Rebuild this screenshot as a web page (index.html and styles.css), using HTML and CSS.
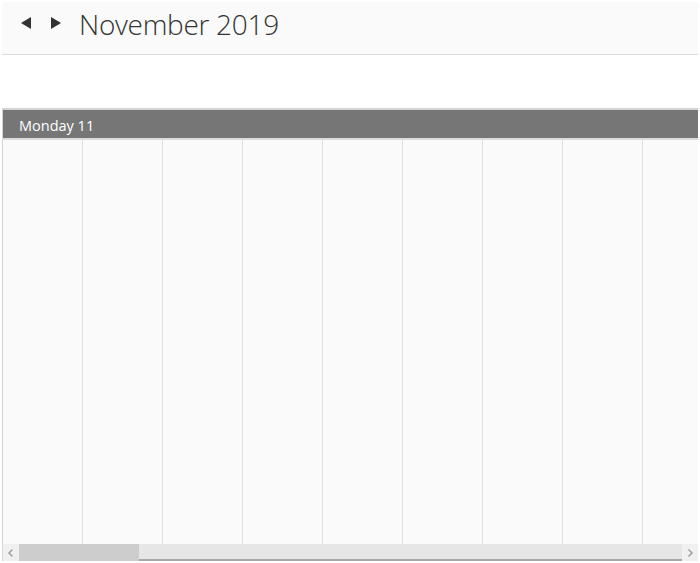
FILE: index.html
```html
<!DOCTYPE html>
<html>
<head>
<meta charset="utf-8">
<link rel="stylesheet" href="styles.css">
</head>
<body>
<div class="scheduler">
  <div class="toolbar">
    <div class="navs">
      <span class="nav prev"></span>
      <span class="nav next"></span>
    </div>
    <div class="title">November 2019</div>
  </div>
  <div class="allday"></div>
  <div class="view">
    <div class="dayhead">Monday 11</div>
    <div class="grid">
      <div class="col"></div><div class="col"></div><div class="col"></div>
      <div class="col"></div><div class="col"></div><div class="col"></div>
      <div class="col"></div><div class="col"></div><div class="col"></div>
    </div>
    <div class="hscroll">
      <div class="sbtn left"><svg width="16" height="16" viewBox="0 0 16 16"><path d="M9.5 4.5 L6 8 L9.5 11.5" fill="none" stroke="#9a9a9a" stroke-width="1.4"/></svg></div>
      <div class="track"><div class="thumb"></div></div>
      <div class="sbtn right"><svg width="16" height="16" viewBox="0 0 16 16"><path d="M6.5 4.5 L10 8 L6.5 11.5" fill="none" stroke="#9a9a9a" stroke-width="1.4"/></svg></div>
    </div>
  </div>
</div>
</body>
</html>
```

FILE: styles.css
```css
html, body {
  margin: 0;
  padding: 0;
  background: #ffffff;
}
body {
  padding: 2px 2px 0 2px;
  font-family: "Open Sans", "Liberation Sans", sans-serif;
}
.scheduler {
  width: 696px;
}
.toolbar {
  height: 52px;
  background: #fafafa;
  border-bottom: 1px solid #d9d9de;
  display: flex;
  align-items: center;
}
.navs {
  display: flex;
  align-items: center;
  gap: 20px;
  padding-left: 19px;
  margin-top: -10px;
}
.nav {
  width: 0;
  height: 0;
  border-top: 6.5px solid transparent;
  border-bottom: 6.5px solid transparent;
}
.prev {
  border-right: 10px solid #333333;
}
.next {
  border-left: 10px solid #333333;
}
.title {
  margin-left: 18px;
  margin-top: -9px;
  font-size: 28px;
  font-weight: 300;
  color: #333333;
  letter-spacing: -0.3px;
}
.allday {
  height: 53px;
  background: #ffffff;
}
.view {
  border-left: 1px solid #d6d6d6;
}
.dayhead {
  height: 26px;
  padding-top: 2px;
  border-top: 2px solid #d3d3d3;
  border-bottom: 2px solid #dcdcdc;
  background: #767676;
  color: #ffffff;
  font-size: 14.5px;
  line-height: 28px;
  padding-left: 16px;
  overflow: hidden;
}
.grid {
  display: flex;
  height: 404px;
  background: #fafafa;
  overflow: hidden;
}
.col {
  flex: 0 0 80px;
  border-right: 1px solid #e0e0e0;
  box-sizing: border-box;
}
.hscroll {
  display: flex;
  height: 17px;
  background: #f0f0f0;
}
.sbtn {
  width: 16px;
  height: 17px;
  display: flex;
  align-items: center;
  justify-content: center;
  background: #f0f0f0;
}
.track {
  flex: 1;
  background: #e6e6e6;
  border-bottom: 2px solid #a8a8a8;
}
.thumb {
  width: 120px;
  height: 17px;
  background: #cdcdcd;
}
```
